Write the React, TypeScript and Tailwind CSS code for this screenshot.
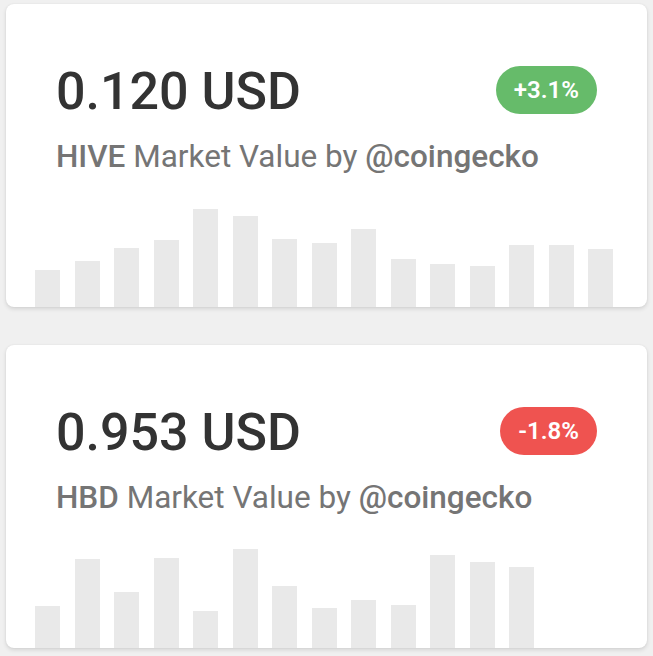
const hive = [37, 46, 59, 67, 98, 91, 68, 64, 78, 48, 43, 41, 62, 62, 58];
const hbd = [42, 89, 56, 90, 37, 99, 62, 40, 48, 43, 93, 86, 81];

type Card = {
  price: string;
  coin: string;
  change: string;
  up: boolean;
  bars: number[];
};

const cards: Card[] = [
  { price: "0.120 USD", coin: "HIVE", change: "+3.1%", up: true, bars: hive },
  { price: "0.953 USD", coin: "HBD", change: "-1.8%", up: false, bars: hbd },
];

function MarketCard({ card }: { card: Card }) {
  return (
    <div className="h-[303px] rounded-[8px] bg-white overflow-hidden shadow-[0_2px_4px_rgba(0,0,0,0.12),0_0_2px_rgba(0,0,0,0.06)] flex flex-col">
      <div className="px-[50px] pt-[62px]">
        <div className="flex items-start justify-between">
          <div className="text-[52px] leading-none font-medium text-[#333333]">{card.price}</div>
          <div
            className={
              card.up
                ? "h-[48px] px-[18px] rounded-full bg-[#66bb6a] text-white text-[24px] font-semibold flex items-center"
                : "h-[48px] px-[18px] rounded-full bg-[#ef5350] text-white text-[24px] font-semibold flex items-center"
            }
          >
            {card.change}
          </div>
        </div>
        <div className="mt-[23px] text-[31.5px] leading-none text-[#757575]">
          <span className="font-medium">{card.coin}</span> Market Value by{" "}
          <span className="font-medium">@coingecko</span>
        </div>
      </div>
      <div className="flex-1 flex items-end gap-[14.5px] pl-[29px]">
        {card.bars.map((h, i) => (
          <div key={i} className="w-[25px] bg-[#e9e9e9]" style={{ height: h }} />
        ))}
      </div>
    </div>
  );
}

export default function App() {
  return (
    <div
      className="min-h-screen bg-[#f0f0f0] pt-[4px] px-[6px] flex flex-col gap-[38px]"
      style={{ fontFamily: "Roboto, 'Liberation Sans', sans-serif" }}
    >
      {cards.map((c) => (
        <MarketCard key={c.coin} card={c} />
      ))}
    </div>
  );
}
